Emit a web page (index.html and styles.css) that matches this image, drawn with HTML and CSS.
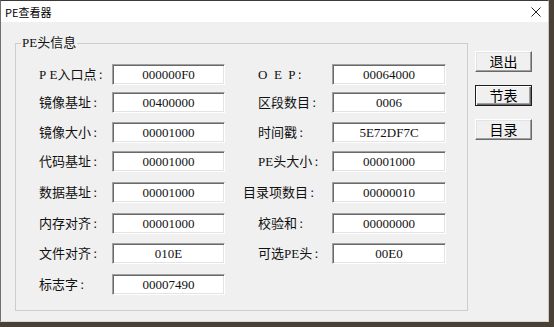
FILE: index.html
```html
<!DOCTYPE html>
<html lang="zh-CN">
<head>
<meta charset="utf-8">
<title>PE查看器</title>
<link rel="stylesheet" href="styles.css">
</head>
<body>
<div class="window">
  <div class="titlebar">
    <span class="title">PE查看器</span>
    <span class="close"><svg width="10" height="10" viewBox="0 0 10 10"><path d="M0.5 0.5 L9.5 9.5 M9.5 0.5 L0.5 9.5" stroke="#222" stroke-width="1" fill="none"/></svg></span>
  </div>
  <div class="client">
    <fieldset class="group">
      <legend class="group-title">PE头信息</legend>
      <div class="grid">
        <span class="lbl">P&nbsp;E入口点<span class="colon">:</span></span><div class="field">000000F0</div>
        <span class="lbl lbl-r">O&nbsp;&nbsp;E&nbsp;&nbsp;P<span class="colon">:</span></span><div class="field">00064000</div>

        <span class="lbl">镜像基址<span class="colon">:</span></span><div class="field">00400000</div>
        <span class="lbl lbl-r">区段数目<span class="colon">:</span></span><div class="field">0006</div>

        <span class="lbl">镜像大小<span class="colon">:</span></span><div class="field">00001000</div>
        <span class="lbl lbl-r">时间戳<span class="colon">:</span></span><div class="field">5E72DF7C</div>

        <span class="lbl">代码基址<span class="colon">:</span></span><div class="field">00001000</div>
        <span class="lbl lbl-r">PE头大小<span class="colon">:</span></span><div class="field">00001000</div>

        <span class="lbl">数据基址<span class="colon">:</span></span><div class="field">00001000</div>
        <span class="lbl lbl-r lbl-wide">目录项数目<span class="colon">:</span></span><div class="field">00000010</div>

        <span class="lbl">内存对齐<span class="colon">:</span></span><div class="field">00001000</div>
        <span class="lbl lbl-r">校验和<span class="colon">:</span></span><div class="field">00000000</div>

        <span class="lbl">文件对齐<span class="colon">:</span></span><div class="field">010E</div>
        <span class="lbl lbl-r">可选PE头<span class="colon">:</span></span><div class="field">00E0</div>

        <span class="lbl">标志字<span class="colon">:</span></span><div class="field">00007490</div>
      </div>
    </fieldset>
    <div class="buttons">
      <div class="btn">退出</div>
      <div class="btn btn-default">节表</div>
      <div class="btn">目录</div>
    </div>
  </div>
</div>
</body>
</html>
```
FILE: styles.css
```css
html, body {
  margin: 0;
  padding: 0;
}
body {
  width: 554px;
  height: 327px;
  overflow: hidden;
  background: #4a4136;
  font-family: "Liberation Serif", "Noto Sans CJK SC", serif;
  color: #111;
}
.window {
  width: 549px;
  height: 322px;
  box-sizing: border-box;
  background: #f0f0f0;
  border-top: 1px solid #3a3a3a;
  border-left: 1px solid #707070;
  border-right: 1px solid #c8c8c8;
  border-bottom: 1px solid #d8d8d8;
  display: flex;
  flex-direction: column;
}
.titlebar {
  height: 21px;
  background: #fff;
  display: flex;
  align-items: center;
  justify-content: space-between;
  padding: 0 7px 0 4px;
  flex: none;
}
.title {
  font-family: "Noto Sans CJK SC", sans-serif;
  font-size: 11px;
  color: #000;
}
.close {
  display: flex;
  width: 10px;
  height: 10px;
}
.client {
  display: flex;
  align-items: flex-start;
  padding: 13px 0 0 14px;
}
.group {
  margin: 0;
  padding: 13px 21px 15px 5px;
  border: 1px solid #cdcdcd;
  box-sizing: border-box;
  width: 453px;
  min-width: 0;
}
.group-title {
  padding: 0 1px;
  margin: 0;
  font-size: 13px;
  line-height: 16px;
  color: #111;
}
.grid {
  margin-left: 18px;
  display: grid;
  grid-template-columns: 73px 113px 107px 114px;
  grid-template-rows: 28px 30px 29px 31px 31px 30px 31px 21px;
  align-items: start;
}
.lbl {
  font-size: 13px;
  line-height: 21px;
  height: 21px;
  white-space: nowrap;
}
.colon {
  font-family: "DejaVu Sans", sans-serif;
  font-size: 13px;
  padding-left: 2px;
}
.lbl-r {
  padding-left: 33px;
}
.lbl-wide {
  padding-left: 18px;
}
.field {
  height: 21px;
  box-sizing: border-box;
  background: #fff;
  border: 1px solid;
  border-color: #a0a0a0 #ffffff #ffffff #a0a0a0;
  box-shadow: inset 1px 1px 0 #696969, inset -1px -1px 0 #e3e3e3;
  text-align: center;
  font-size: 13px;
  line-height: 19px;
  color: #111;
}
.buttons {
  margin: 16px 0 0 7px;
  display: flex;
  flex-direction: column;
  gap: 13px;
}
.btn {
  width: 57px;
  height: 21px;
  box-sizing: border-box;
  background: #f0f0f0;
  border: 1px solid;
  border-color: #ffffff #696969 #696969 #ffffff;
  box-shadow: inset -1px -1px 0 #a0a0a0, inset 1px 1px 0 #e3e3e3;
  font-family: "Noto Sans CJK SC", sans-serif;
  font-size: 14px;
  line-height: 18px;
  text-align: center;
  color: #000;
}
.btn-default {
  border-color: #1e1e1e;
  box-shadow: inset 1px 1px 0 #ffffff, inset -1px -1px 0 #696969, inset -2px -2px 0 #a0a0a0;
}
```
